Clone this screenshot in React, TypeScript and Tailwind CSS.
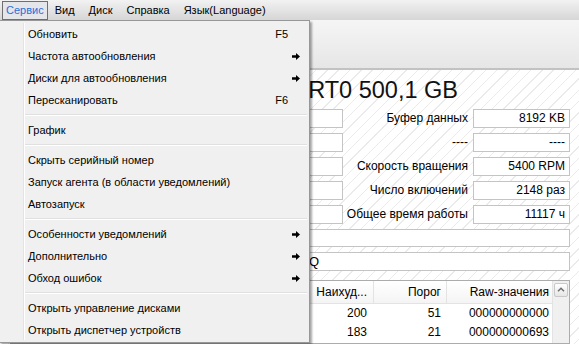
import React from 'react';

type Item =
  | { kind: 'item'; label: string; shortcut?: string; submenu?: boolean }
  | { kind: 'sep' };

const menuItems: Item[] = [
  { kind: 'item', label: 'Обновить', shortcut: 'F5' },
  { kind: 'item', label: 'Частота автообновления', submenu: true },
  { kind: 'item', label: 'Диски для автообновления', submenu: true },
  { kind: 'item', label: 'Пересканировать', shortcut: 'F6' },
  { kind: 'sep' },
  { kind: 'item', label: 'График' },
  { kind: 'sep' },
  { kind: 'item', label: 'Скрыть серийный номер' },
  { kind: 'item', label: 'Запуск агента (в области уведомлений)' },
  { kind: 'item', label: 'Автозапуск' },
  { kind: 'sep' },
  { kind: 'item', label: 'Особенности уведомлений', submenu: true },
  { kind: 'item', label: 'Дополнительно', submenu: true },
  { kind: 'item', label: 'Обход ошибок', submenu: true },
  { kind: 'sep' },
  { kind: 'item', label: 'Открыть управление дисками' },
  { kind: 'item', label: 'Открыть диспетчер устройств' },
];

const fields = [
  ['Буфер данных', '8192 KB'],
  ['----', '----'],
  ['Скорость вращения', '5400 RPM'],
  ['Число включений', '2148 раз'],
  ['Общее время работы', '11117 ч'],
];

// only the columns that are not covered by the open menu
const rows = [
  ['200', '51', '000000000000'],
  ['183', '21', '000000000693'],
];

const cols = ['w-[80px] pr-[6px]', 'w-[73px] pr-[5px]', 'w-[106px] pr-[3px]'];

function Arrow() {
  return (
    <svg width="8" height="7" viewBox="0 0 8 7" className="mr-[9px]">
      <path d="M0 2.3h4V0l4 3.5L4 7V4.7H0z" fill="#000" />
    </svg>
  );
}

function DropdownMenu() {
  return (
    <div className="absolute left-[-1px] top-[20px] w-[311px] bg-[#f0f0f0] border border-[#979797] pt-[2px] pb-px shadow-[2px_2px_2px_rgba(0,0,0,0.35)] text-[11px]">
      <div className="absolute left-[23px] top-[2px] bottom-[2px] w-px bg-[#e2e3e3]" />
      <div className="absolute left-[24px] top-[2px] bottom-[2px] w-px bg-white" />
      {menuItems.map((it, i) =>
        it.kind === 'sep' ? (
          <div key={i} className="h-[8px] flex flex-col justify-center pl-[25px] pr-[2px]">
            <div className="h-px bg-[#e0e0e0]" />
            <div className="h-px bg-white" />
          </div>
        ) : (
          <div key={i} className="relative h-[22px] flex items-center pl-[28px]">
            <span className="flex-1">{it.label}</span>
            {it.shortcut && <span className="mr-[21px]">{it.shortcut}</span>}
            {it.submenu && <Arrow />}
          </div>
        )
      )}
    </div>
  );
}

function MenuBar() {
  return (
    <div className="h-[20px] flex items-center text-[11px] bg-linear-to-b from-[#f2f2f2] to-[#d6d6d6]">
      <div className="ml-[2px] h-[19px] mt-px flex items-center px-[3px] border border-[#6f6f6f] bg-[#e4e6ea] text-[#2a6fd8]">
        Сервис
      </div>
      {['Вид', 'Диск', 'Справка', 'Язык(Language)'].map((t) => (
        <div key={t} className="px-[7px]">
          {t}
        </div>
      ))}
    </div>
  );
}

export default function App() {
  return (
    <div className="relative w-[579px] h-[344px] overflow-hidden bg-white text-black text-[12px] leading-none font-['Liberation_Sans',Arial,sans-serif]">
      <MenuBar />
      <div className="h-[50px] bg-linear-to-b from-[#f5f5f5] via-[#eeeeee] to-[#e6e6e6] border-b-2 border-[#c2c2c2]" />

      <div className="h-[274px] flex flex-col items-end pr-[9px] bg-[repeating-linear-gradient(135deg,#ffffff_0px,#ffffff_7px,#ebebeb_7px,#ebebeb_8px)]">
        <div className="h-[34px] pt-[6px] pr-[112px] whitespace-nowrap text-[23.5px] leading-[28px] text-[#111]">
          RT0 500,1 GB
        </div>

        <div className="mt-[5px] flex flex-col gap-[5px]">
          {fields.map(([label, value], i) => (
            <div key={i} className="flex h-[19px]">
              <div className="w-[150px] bg-white border border-[#c4c4c4]" />
              <div className="w-[130px] text-right pr-[5px] leading-[19px] whitespace-nowrap">{label}</div>
              <div className="w-[97px] bg-white border border-[#c4c4c4] text-right pr-[4px] leading-[17px]">{value}</div>
            </div>
          ))}
        </div>

        <div className="mt-[5px] w-[420px] h-[19px] bg-white border border-[#c4c4c4]" />
        <div className="mt-[5px] w-[420px] h-[19px] bg-white border border-[#c4c4c4] leading-[17px] text-[13px] flex">
          <div className="w-[168px] text-right whitespace-nowrap overflow-hidden">Q</div>
        </div>

        <div className="mt-[9px] w-[560px] h-[70px] flex bg-white border border-[#acacac]">
          <div className="flex-1 flex flex-col">
            <div className="h-[23px] flex justify-end bg-linear-to-b from-white to-[#f4f4f4] border-b border-[#e3e3e3]">
              {['Наихуд...', 'Порог', 'Raw-значения'].map((h, i) => (
                <div
                  key={h}
                  className={
                    'h-full flex items-center justify-end whitespace-nowrap border-l border-[#e3e3e3] ' + cols[i]
                  }
                >
                  {h}
                </div>
              ))}
            </div>
            {rows.map((r, ri) => (
              <div key={ri} className="h-[19px] flex items-center justify-end">
                {r.map((c, i) => (
                  <div key={i} className={'text-right whitespace-nowrap border-l border-transparent ' + cols[i]}>
                    {c}
                  </div>
                ))}
              </div>
            ))}
          </div>
          <div className="w-[17px] bg-[#f0f0f0] border-l border-[#e3e3e3] pt-[2px] flex justify-center">
            <div className="w-[14px] h-[14px] rounded-[2px] border border-[#c8c8c8] bg-linear-to-b from-white to-[#e6e6e6] flex items-center justify-center">
              <svg width="8" height="5" viewBox="0 0 8 5">
                <path d="M1 4.2 4 1.2 7 4.2" fill="none" stroke="#707070" strokeWidth="1.5" />
              </svg>
            </div>
          </div>
        </div>
      </div>

      <DropdownMenu />
    </div>
  );
}
